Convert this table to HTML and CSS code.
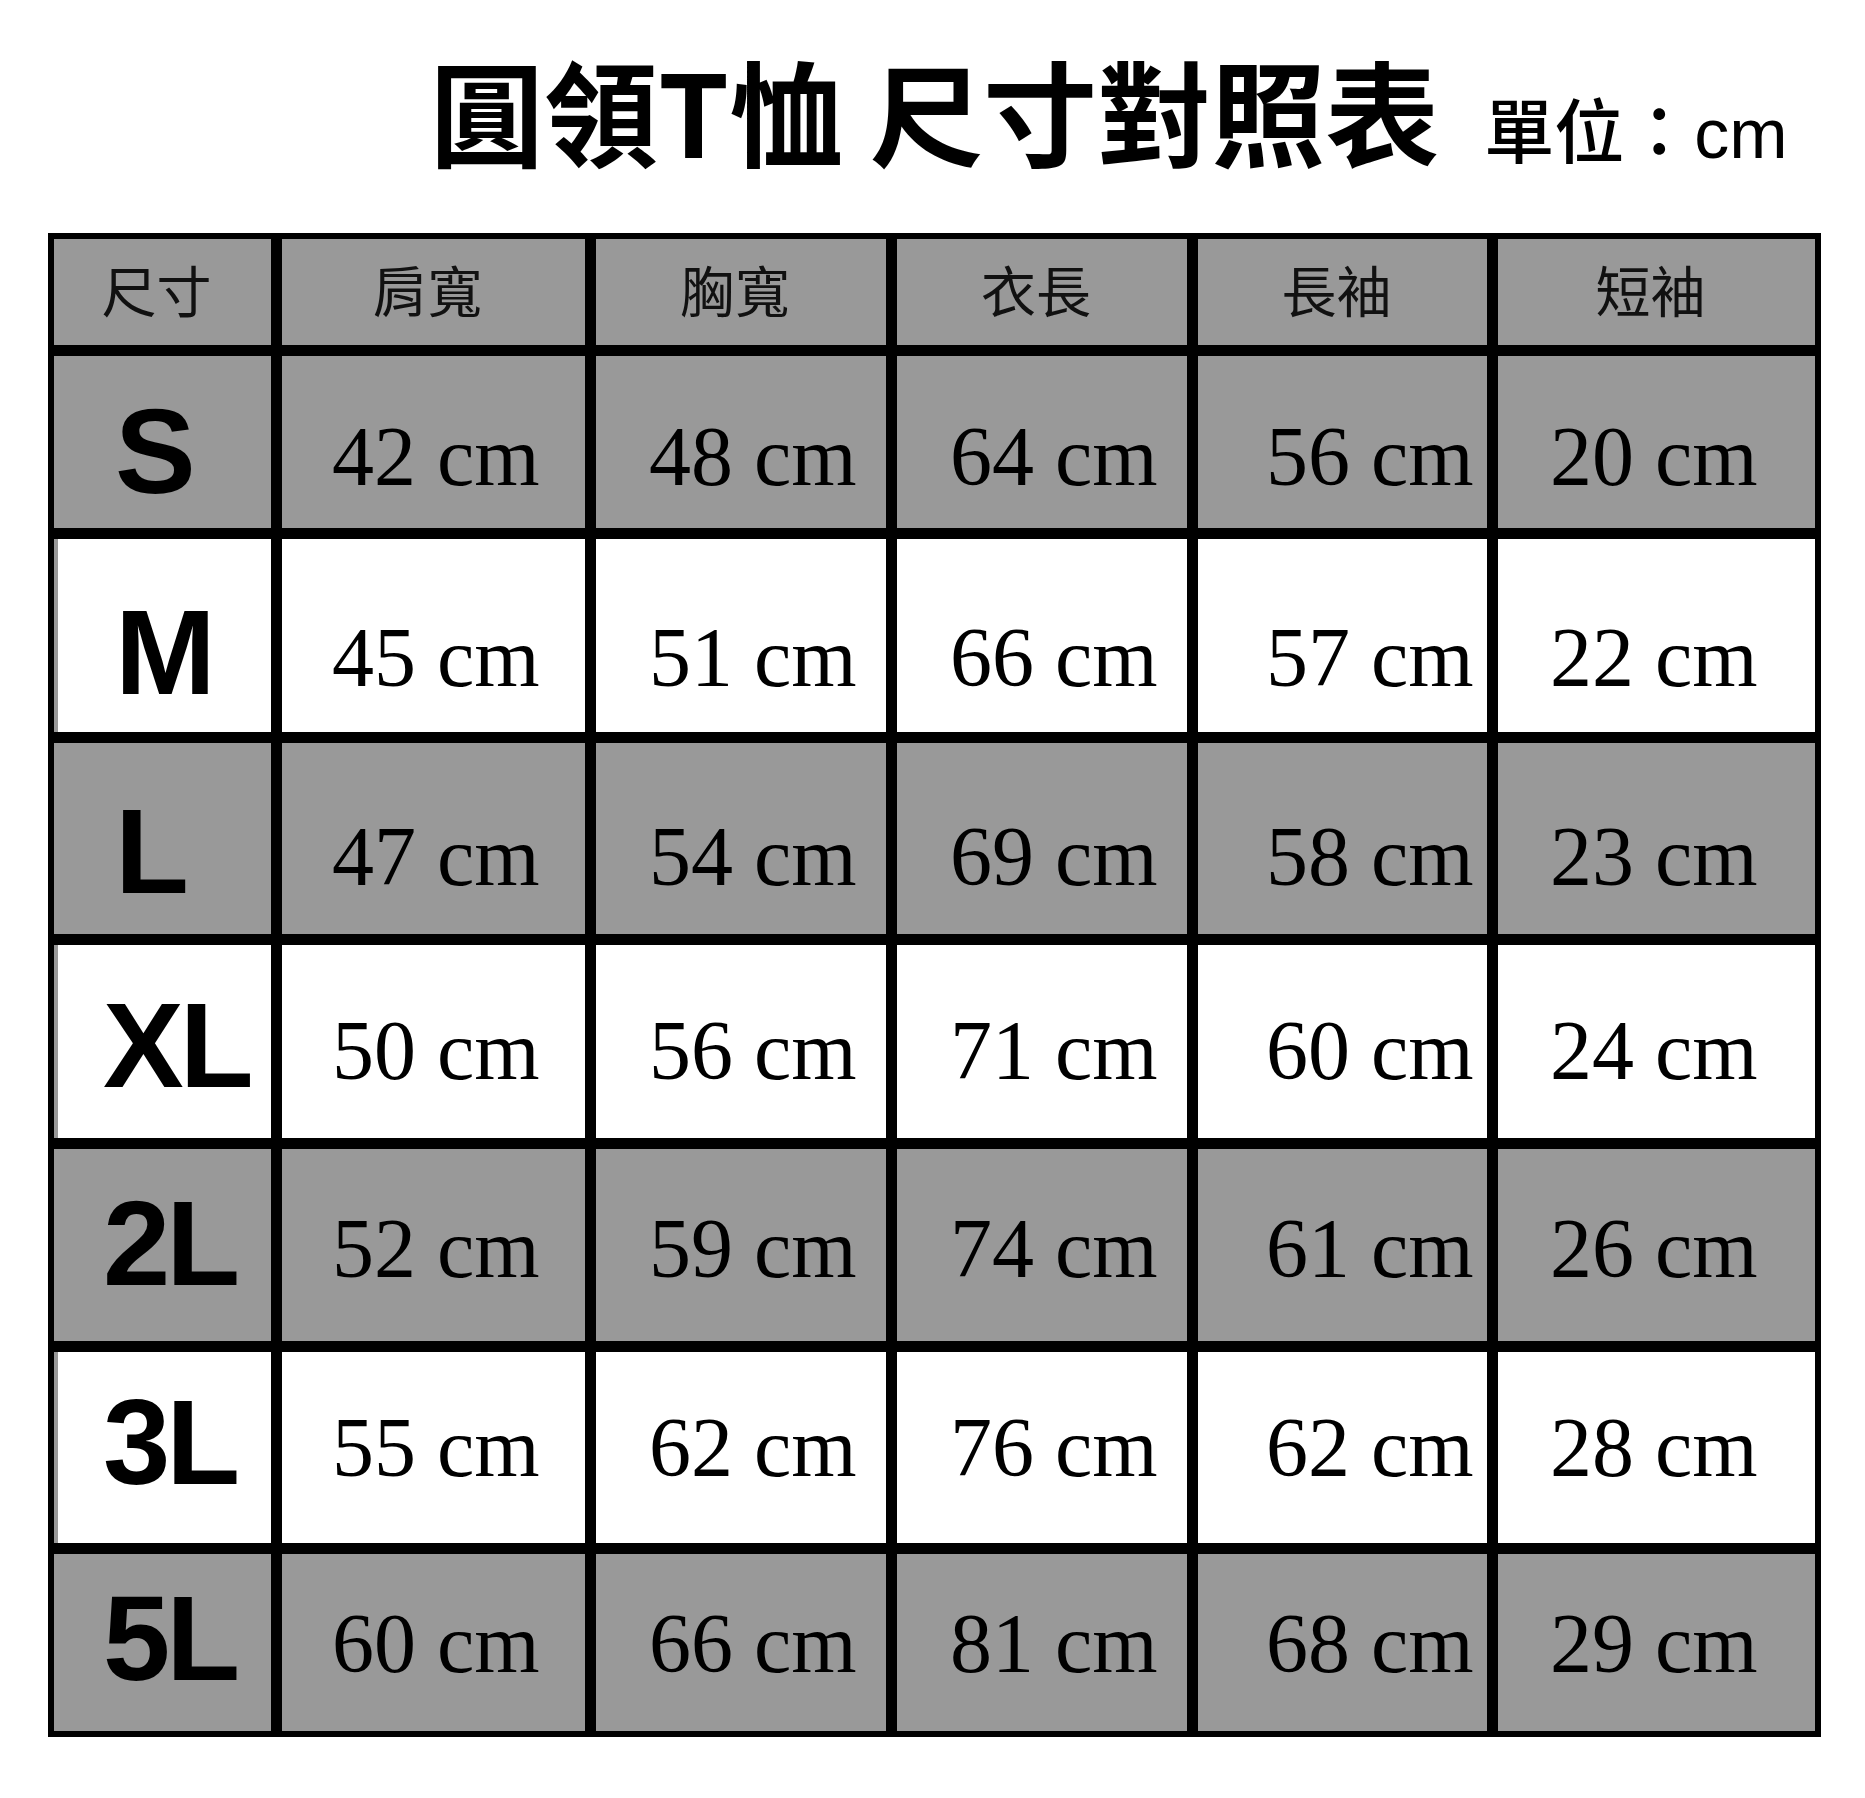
FILE: index.html
```html
<!DOCTYPE html>
<html lang="zh-Hant">
<head>
<meta charset="utf-8">
<title>圓領T恤 尺寸對照表</title>
<link rel="stylesheet" href="styles.css">
</head>
<body>
<div class="page">
  <header class="title-bar">
    <h1 class="title">圓領T恤 尺寸對照表</h1>
    <span class="unit">單位：cm</span>
  </header>
  <div class="chart">
    <div class="row head gray">
      <div class="cell">尺寸</div>
      <div class="cell">肩寬</div>
      <div class="cell">胸寬</div>
      <div class="cell">衣長</div>
      <div class="cell">長袖</div>
      <div class="cell">短袖</div>
    </div>
    <div class="row gray r-s">
      <div class="cell size">S</div>
      <div class="cell num">42 cm</div>
      <div class="cell num">48 cm</div>
      <div class="cell num">64 cm</div>
      <div class="cell num">56 cm</div>
      <div class="cell num">20 cm</div>
    </div>
    <div class="row white r-m">
      <div class="cell size">M</div>
      <div class="cell num">45 cm</div>
      <div class="cell num">51 cm</div>
      <div class="cell num">66 cm</div>
      <div class="cell num">57 cm</div>
      <div class="cell num">22 cm</div>
    </div>
    <div class="row gray r-l">
      <div class="cell size">L</div>
      <div class="cell num">47 cm</div>
      <div class="cell num">54 cm</div>
      <div class="cell num">69 cm</div>
      <div class="cell num">58 cm</div>
      <div class="cell num">23 cm</div>
    </div>
    <div class="row white r-xl">
      <div class="cell size two">XL</div>
      <div class="cell num">50 cm</div>
      <div class="cell num">56 cm</div>
      <div class="cell num">71 cm</div>
      <div class="cell num">60 cm</div>
      <div class="cell num">24 cm</div>
    </div>
    <div class="row gray r-2l">
      <div class="cell size two">2L</div>
      <div class="cell num">52 cm</div>
      <div class="cell num">59 cm</div>
      <div class="cell num">74 cm</div>
      <div class="cell num">61 cm</div>
      <div class="cell num">26 cm</div>
    </div>
    <div class="row white r-3l">
      <div class="cell size two">3L</div>
      <div class="cell num">55 cm</div>
      <div class="cell num">62 cm</div>
      <div class="cell num">76 cm</div>
      <div class="cell num">62 cm</div>
      <div class="cell num">28 cm</div>
    </div>
    <div class="row gray r-5l">
      <div class="cell size two">5L</div>
      <div class="cell num">60 cm</div>
      <div class="cell num">66 cm</div>
      <div class="cell num">81 cm</div>
      <div class="cell num">68 cm</div>
      <div class="cell num">29 cm</div>
    </div>
  </div>
</div>
</body>
</html>
```
FILE: styles.css
```css
html, body {
  margin: 0;
  padding: 0;
  background: #ffffff;
}

.page {
  width: 1865px;
  min-height: 1798px;
  color: #000000;
}

.title-bar {
  box-sizing: border-box;
  height: 233px;
  padding: 52px 0 0 430px;
  display: flex;
  align-items: baseline;
}

.title {
  margin: 0;
  font-family: "Noto Sans CJK TC", "Liberation Sans", sans-serif;
  font-size: 114px;
  font-weight: 700;
  line-height: 1;
  white-space: pre;
}

.unit {
  margin-left: 45px;
  font-family: "Liberation Sans", "Noto Sans CJK TC", sans-serif;
  font-size: 70px;
  font-weight: 500;
  line-height: 1;
}

.chart {
  box-sizing: border-box;
  width: 1773px;
  margin-left: 48px;
  border: 6px solid #000000;
  background: #000000;
  display: flex;
  flex-direction: column;
  gap: 11px;
}

.row {
  display: grid;
  grid-template-columns: 217px 303px 290px 290px 289px 317px;
  column-gap: 11px;
}

.row.gray .cell { background: #999999; }
.row.white .cell { background: #ffffff; }
.row.white .cell.size { box-shadow: inset 4px 0 0 #999999; }

.head { height: 106px; }
.r-s { height: 172px; --base: 129px; }
.r-m { height: 193px; --base: 147px; }
.r-l { height: 191px; --base: 142px; }
.r-xl { height: 193px; --base: 134px; }
.r-2l { height: 192px; --base: 128px; }
.r-3l { height: 191px; --base: 124px; }
.r-5l { height: 177px; --base: 118px; }

.head .cell {
  display: flex;
  align-items: center;
  justify-content: center;
  padding-right: 12px;
  padding-bottom: 8px;
  font-family: "Noto Sans CJK TC", sans-serif;
  font-size: 55px;
  font-weight: 400;
  line-height: 1;
  color: #111111;
}

.cell {
  box-sizing: border-box;
  white-space: nowrap;
}

.size {
  padding-left: 61px;
  padding-top: calc(var(--base) + 10px - 104px);
  font-family: "Liberation Sans", Arial, sans-serif;
  font-weight: 700;
  font-size: 121px;
  line-height: 1;
  letter-spacing: -4px;
}

.size.two {
  padding-left: 49px;
}

.num {
  padding-top: calc(var(--base) - 70px);
  font-family: "Liberation Serif", "Times New Roman", serif;
  font-size: 84px;
  line-height: 1;
}

.num:nth-child(2) { padding-left: 50px; }
.num:nth-child(3) { padding-left: 53px; }
.num:nth-child(4) { padding-left: 53px; }
.num:nth-child(5) { padding-left: 68px; }
.num:nth-child(6) { padding-left: 52px; }
```
